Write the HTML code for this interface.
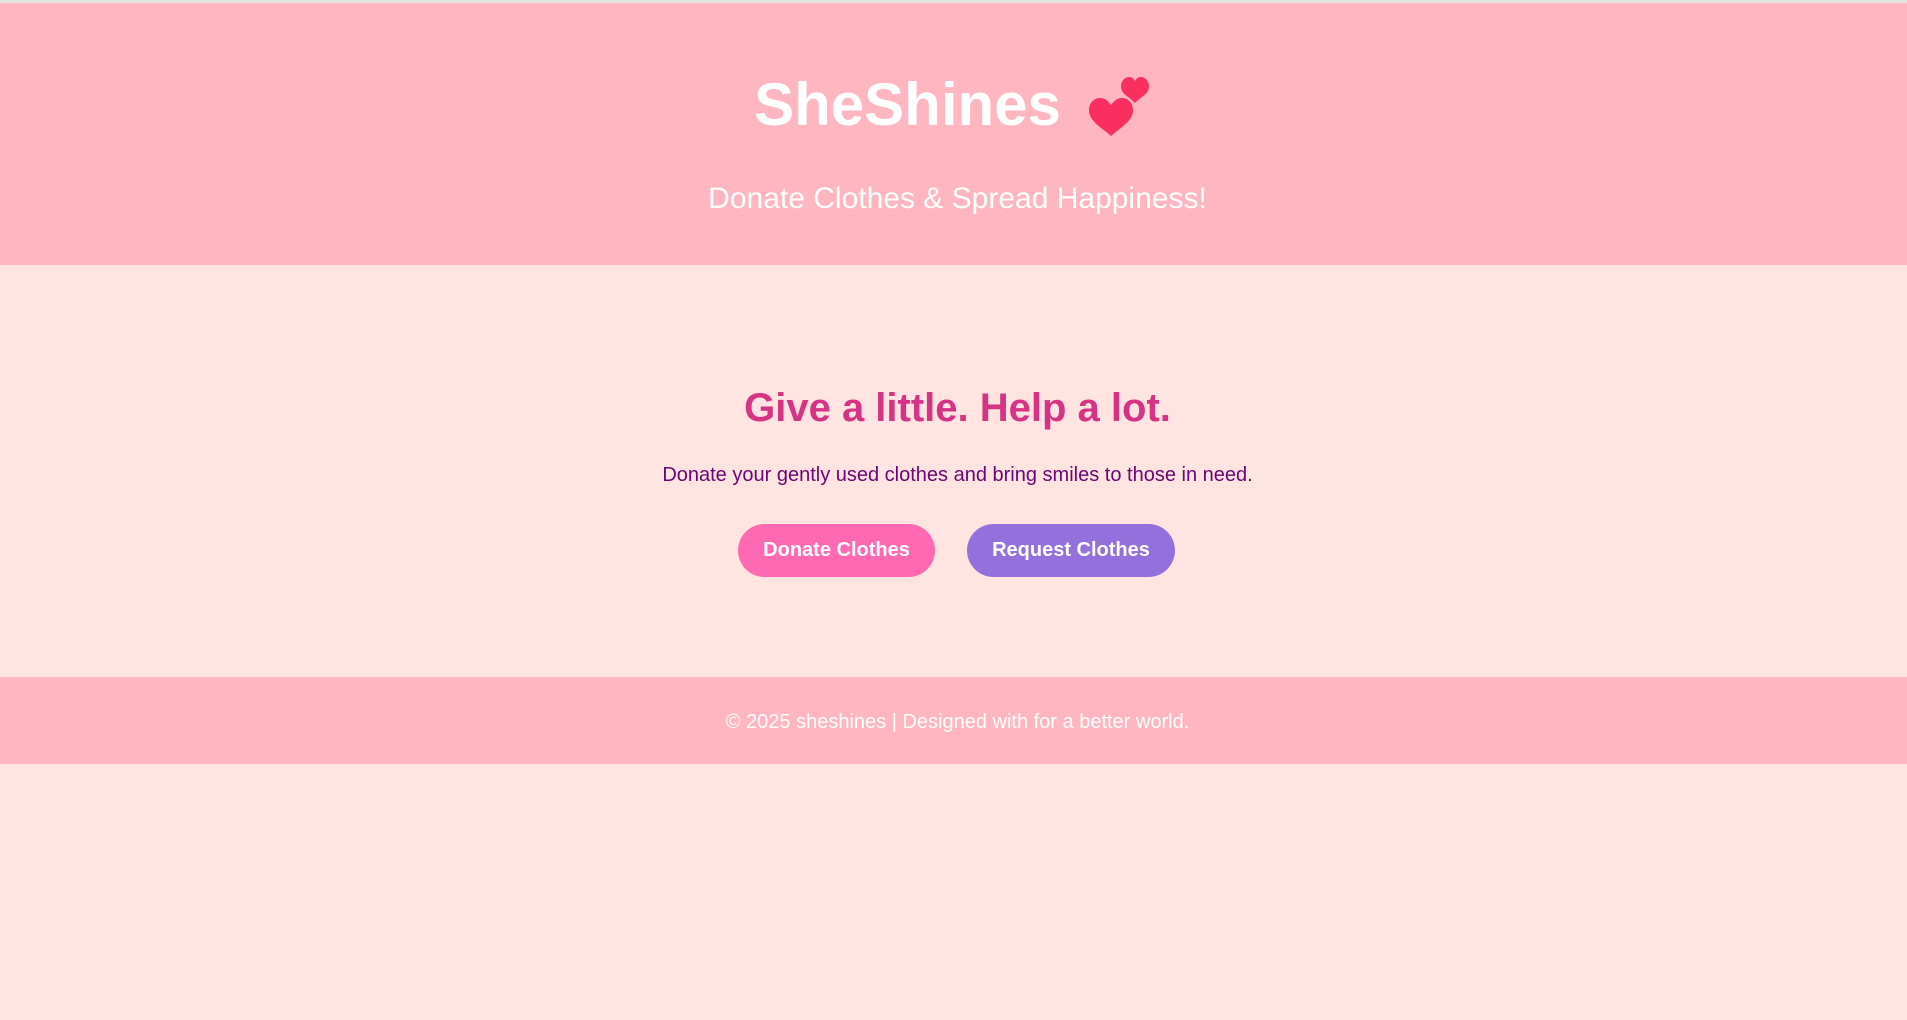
<!DOCTYPE html>
<html><head><meta charset="utf-8"><style>
*{margin:0;padding:0;box-sizing:border-box}
html,body{width:1907px;height:1020px;background:#FFE4E1;font-family:"Liberation Sans",Arial,sans-serif;overflow:hidden}
.topline{height:3px;background:#e3e6dc}
.c{position:absolute;left:4px;width:1907px;text-align:center}
header{position:absolute;top:3px;left:0;width:1907px;height:262px;background:#FFB6C1;color:#fff}
h1.c{top:64px;font-size:60px;font-weight:bold;line-height:76px;left:-46px}
.hearts{position:absolute;left:1086px;top:72px}
.sub{top:178px;font-size:30px;line-height:36px}
h2{top:384px;font-size:40px;font-weight:bold;color:#D63384;line-height:48px}
p.t{top:463px;font-size:20px;color:#6A0572;line-height:24px}
.btn{position:absolute;top:524px;height:53px;border-radius:27px;color:#fff;font-weight:bold;font-size:20px;line-height:53px;text-align:center}
footer{position:absolute;top:677px;left:0;width:1907px;height:87px;background:#FFB6C1;color:#fff}
footer div{top:0;font-size:20px;line-height:90px}
</style></head><body>
<div class="topline"></div>
<header>
<h1 class="c">SheShines</h1>
<div class="c sub">Donate Clothes &amp; Spread Happiness!</div>
</header>
<svg class="hearts" width="70" height="68" viewBox="0 0 70 68">
<path d="M47 29 C42 24 35 22 35 14 C35 9 39 5 43 5 C46 5 48 7 49 9 C50 7 52 5 55 5 C59 5 63 9 63 14 C63 22 56 24 51 29 L49 31 Z" fill="#F92F60"/>
<path d="M25 64 C18 57 3 50 3 38 C3 31 8 26 14 26 C19 26 22 29 25 33 C28 29 31 26 36 26 C42 26 47 31 47 38 C47 50 32 57 25 64 Z" fill="#F92F60"/>
</svg>
<h2 class="c">Give a little. Help a lot.</h2>
<p class="c t">Donate your gently used clothes and bring smiles to those in need.</p>
<div class="btn" style="left:738px;width:197px;background:#FF69B4">Donate Clothes</div>
<div class="btn" style="left:967px;width:208px;background:#9370DB">Request Clothes</div>
<footer><div class="c">© 2025 sheshines | Designed with for a better world.</div></footer>
</body></html>
